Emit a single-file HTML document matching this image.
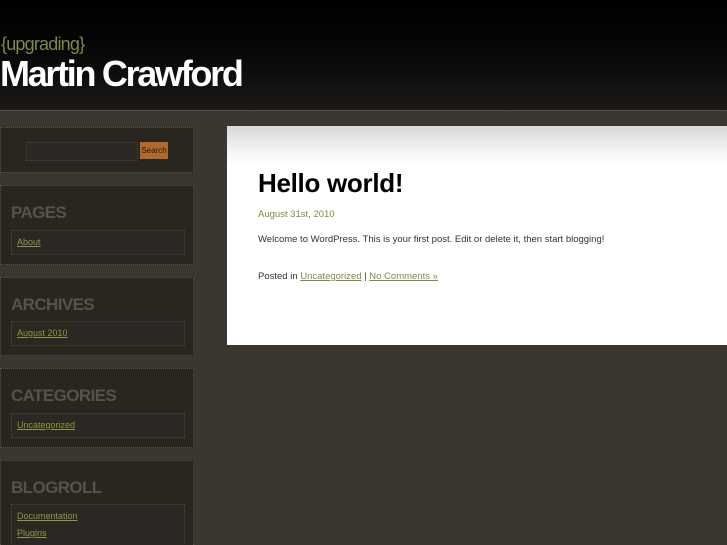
<!DOCTYPE html>
<html style="overflow:hidden;height:545px"><head><style>
body{margin:0;width:727px;height:545px;overflow:hidden;background:#3b3630;font-family:"Liberation Sans",sans-serif;position:relative}
#hd{position:absolute;left:0;top:0;width:727px;height:110px;background:linear-gradient(#000 0,#050505 40%,#1a1917 100%);border-bottom:1px solid #555048}
#tag{position:absolute;left:1px;top:34px;color:#7b8a49;font-size:18px;letter-spacing:-0.8px}
#ttl{position:absolute;left:0;top:53px;color:#fff;font-size:36px;font-weight:bold;letter-spacing:-2.3px}
.box{position:absolute;left:0;width:194px;background:#29251f;border:1px dotted #5a5348;box-sizing:border-box}
.box h2{margin:0;position:absolute;left:10px;top:17px;font-size:17px;color:#58524a;letter-spacing:-0.6px}
.lst{position:absolute;left:10px;width:174px;border:1px dotted #4d473e;box-sizing:border-box;background:#2b2722}
.lst a{display:block;font-size:9px;color:#8a9a45;text-decoration:underline;margin:0 0 0 5px;line-height:17px}
#main{position:absolute;left:227px;top:126px;width:500px;height:219px;background:linear-gradient(#d8d8d8 0,#f4f4f4 25px,#fff 40px)}
#main h1{position:absolute;left:31px;top:42px;margin:0;font-size:26px;color:#000;letter-spacing:-0.3px}
.p{position:absolute;left:31px;font-size:9.5px;color:#333;white-space:nowrap}
.p a{color:#7b8a49;text-decoration:underline}
</style></head><body>
<div id="hd"><div id="tag">{upgrading}</div><div id="ttl">Martin Crawford</div></div>
<div class="box" style="top:127px;height:46px">
<div style="position:absolute;left:25px;top:14px;width:110px;height:17px;border:1px dotted #4a443b;background:#2c2823"></div>
<div style="position:absolute;left:139px;top:14px;width:28px;height:17px;background:#b06a2e;font-size:8px;color:#2a1a0a;text-align:center;line-height:17px">Search</div>
</div>
<div class="box" style="top:185px;height:80px"><h2>PAGES</h2><div class="lst" style="top:44px;height:25px;padding-top:3px"><a>About</a></div></div>
<div class="box" style="top:277px;height:79px"><h2>ARCHIVES</h2><div class="lst" style="top:43px;height:25px;padding-top:3px"><a>August 2010</a></div></div>
<div class="box" style="top:368px;height:80px"><h2>CATEGORIES</h2><div class="lst" style="top:44px;height:25px;padding-top:3px"><a>Uncategorized</a></div></div>
<div class="box" style="top:460px;height:85px;border-bottom:none"><h2>BLOGROLL</h2><div class="lst" style="top:43px;height:42px;padding-top:3px;border-bottom:none"><a>Documentation</a><a>Plugins</a></div></div>
<div id="main"><h1>Hello world!</h1>
<div class="p" style="top:83px;color:#7b8a49">August 31st, 2010</div>
<div class="p" style="top:108px">Welcome to WordPress. This is your first post. Edit or delete it, then start blogging!</div>
<div class="p" style="top:145px">Posted in <a>Uncategorized</a> | <a>No Comments »</a></div>
</div>
</body></html>
